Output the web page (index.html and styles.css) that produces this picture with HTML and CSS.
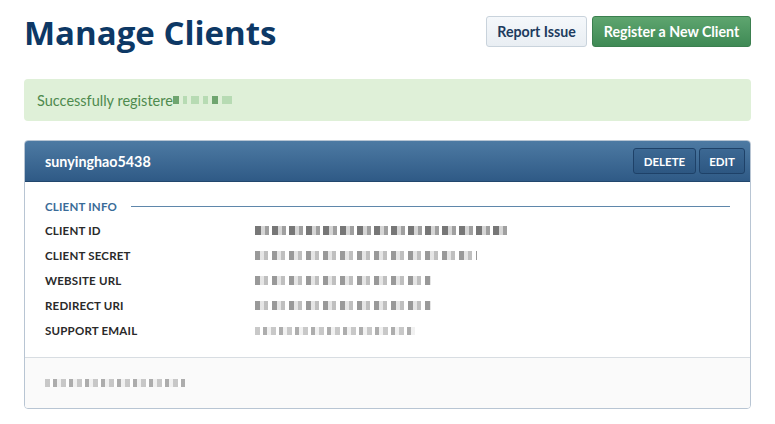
FILE: index.html
```html
<!DOCTYPE html>
<html>
<head>
<meta charset="utf-8">
<link rel="stylesheet" href="styles.css">
</head>
<body>
<div class="page">
  <header class="top">
    <h1 class="title">Manage Clients</h1>
    <div class="actions">
      <button class="btn btn-light">Report Issue</button>
      <button class="btn btn-green">Register a New Client</button>
    </div>
  </header>

  <div class="alert">
    <span>Successfully registere</span><span class="blur blur-green"><i style="width:6px"></i><i class="g" style="width:4px"></i><i class="g" style="width:8px"></i><i class="g" style="width:5px"></i><i style="width:6px"></i><i class="g" style="width:10px"></i></span>
  </div>

  <section class="panel">
    <div class="panel-head">
      <span class="panel-title">sunyinghao5438</span>
      <div class="panel-btns">
        <button class="pbtn">DELETE</button>
        <button class="pbtn">EDIT</button>
      </div>
    </div>
    <div class="panel-body">
      <div class="section-title">
        <span>CLIENT INFO</span>
        <span class="rule"></span>
      </div>
      <div class="rows">
        <div class="row"><span class="label">CLIENT ID</span><span class="blur dark" style="width:252px"></span></div>
        <div class="row"><span class="label">CLIENT SECRET</span><span class="blur mid" style="width:222px"></span></div>
        <div class="row"><span class="label">WEBSITE URL</span><span class="blur mid" style="width:176px"></span></div>
        <div class="row"><span class="label">REDIRECT URI</span><span class="blur mid" style="width:176px"></span></div>
        <div class="row"><span class="label">SUPPORT EMAIL</span><span class="blur light" style="width:160px"></span></div>
      </div>
    </div>
    <div class="panel-foot">
      <span class="blur light" style="width:140px"></span>
    </div>
  </section>
</div>
</body>
</html>
```
FILE: styles.css
```css
* { box-sizing: border-box; }
html, body { margin: 0; padding: 0; background: #fff; }
body { font-family: "Lato", "Open Sans", "Liberation Sans", sans-serif; color: #222; }
.page { padding: 12px 24px 0 24px; width: 775px; }
.top { display: flex; justify-content: space-between; align-items: flex-start; height: 67px; }
.title { margin: 0; font-family: "Open Sans", "Lato", sans-serif; font-size: 33px; font-weight: 700; color: #0d3865; letter-spacing: 0; line-height: 42px; }
.actions { display: flex; gap: 5px; margin-top: 4px; }
.btn { font-family: inherit; font-size: 14.2px; font-weight: 700; height: 31px; border-radius: 3px; padding: 0; cursor: pointer; }
.btn-light { background: linear-gradient(#f5f8fb, #e9eef3); border: 1px solid #c9d3dc; color: #1d3b5e; width: 101px; }
.btn-green { background: linear-gradient(#5ea56f, #3f8a55); border: 1px solid #3b7f4f; color: #fff; width: 159px; }
.alert { background: #dff0d8; border-radius: 4px; height: 42px; display: flex; align-items: center; padding: 0 13px; font-size: 14.5px; color: #4e8a4e; }
.blur { display: inline-flex; align-items: center; height: 10px; }
.blur-green { gap: 4px; }
.blur-green i { display: inline-block; height: 8px; background: #6fa56f; }
.blur-green i.g { background: #b7dbb3; }
.panel { margin-top: 19px; border: 1px solid #b8c5d3; border-radius: 4px; overflow: hidden; }
.panel-head { height: 41px; background: linear-gradient(#4d7aa3, #2f5a86); display: flex; align-items: center; justify-content: space-between; padding: 0 5px 0 20px; border-bottom: 1px solid #22476d; }
.panel-title { color: #fff; font-weight: 700; font-size: 14.3px; }
.panel-btns { display: flex; gap: 3px; }
.pbtn { font-family: inherit; font-size: 11.5px; font-weight: 700; color: #fff; background: linear-gradient(#3c6893, #2d5782); border: 1px solid #1e4168; border-radius: 3px; height: 26px; padding: 0; }
.pbtn:first-child { width: 63px; }
.pbtn:last-child { width: 46px; }
.panel-body { padding: 16px 20px 14px 20px; border-bottom: 1px solid #d8dde2; }
.section-title { display: flex; align-items: center; gap: 14px; font-size: 11.5px; font-weight: 700; color: #3a6b98; letter-spacing: 0.2px; height: 16px; }
.rule { flex: 1; height: 1px; background: #5f87ab; }
.rows { margin-top: 4px; }
.row { display: flex; align-items: center; height: 25px; }
.label { width: 210px; font-size: 11.5px; font-weight: 700; color: #2a2a2a; letter-spacing: 0.2px; }
.blur.dark { background: repeating-linear-gradient(90deg, #555 0 6px, #ccc 6px 10px, #888 10px 14px, #fff 14px 17px); height: 9px; opacity: 0.8; }
.blur.mid { background: repeating-linear-gradient(90deg, #777 0 5px, #ddd 5px 9px, #aaa 9px 13px, #fff 13px 17px); height: 9px; opacity: 0.75; }
.blur.light { background: repeating-linear-gradient(90deg, #bbb 0 5px, #fff 5px 8px, #999 8px 12px, #eee 12px 16px); height: 8px; opacity: 0.8; }
.panel-foot { background: #fafafa; height: 50px; display: flex; align-items: center; padding: 0 20px; }
```
